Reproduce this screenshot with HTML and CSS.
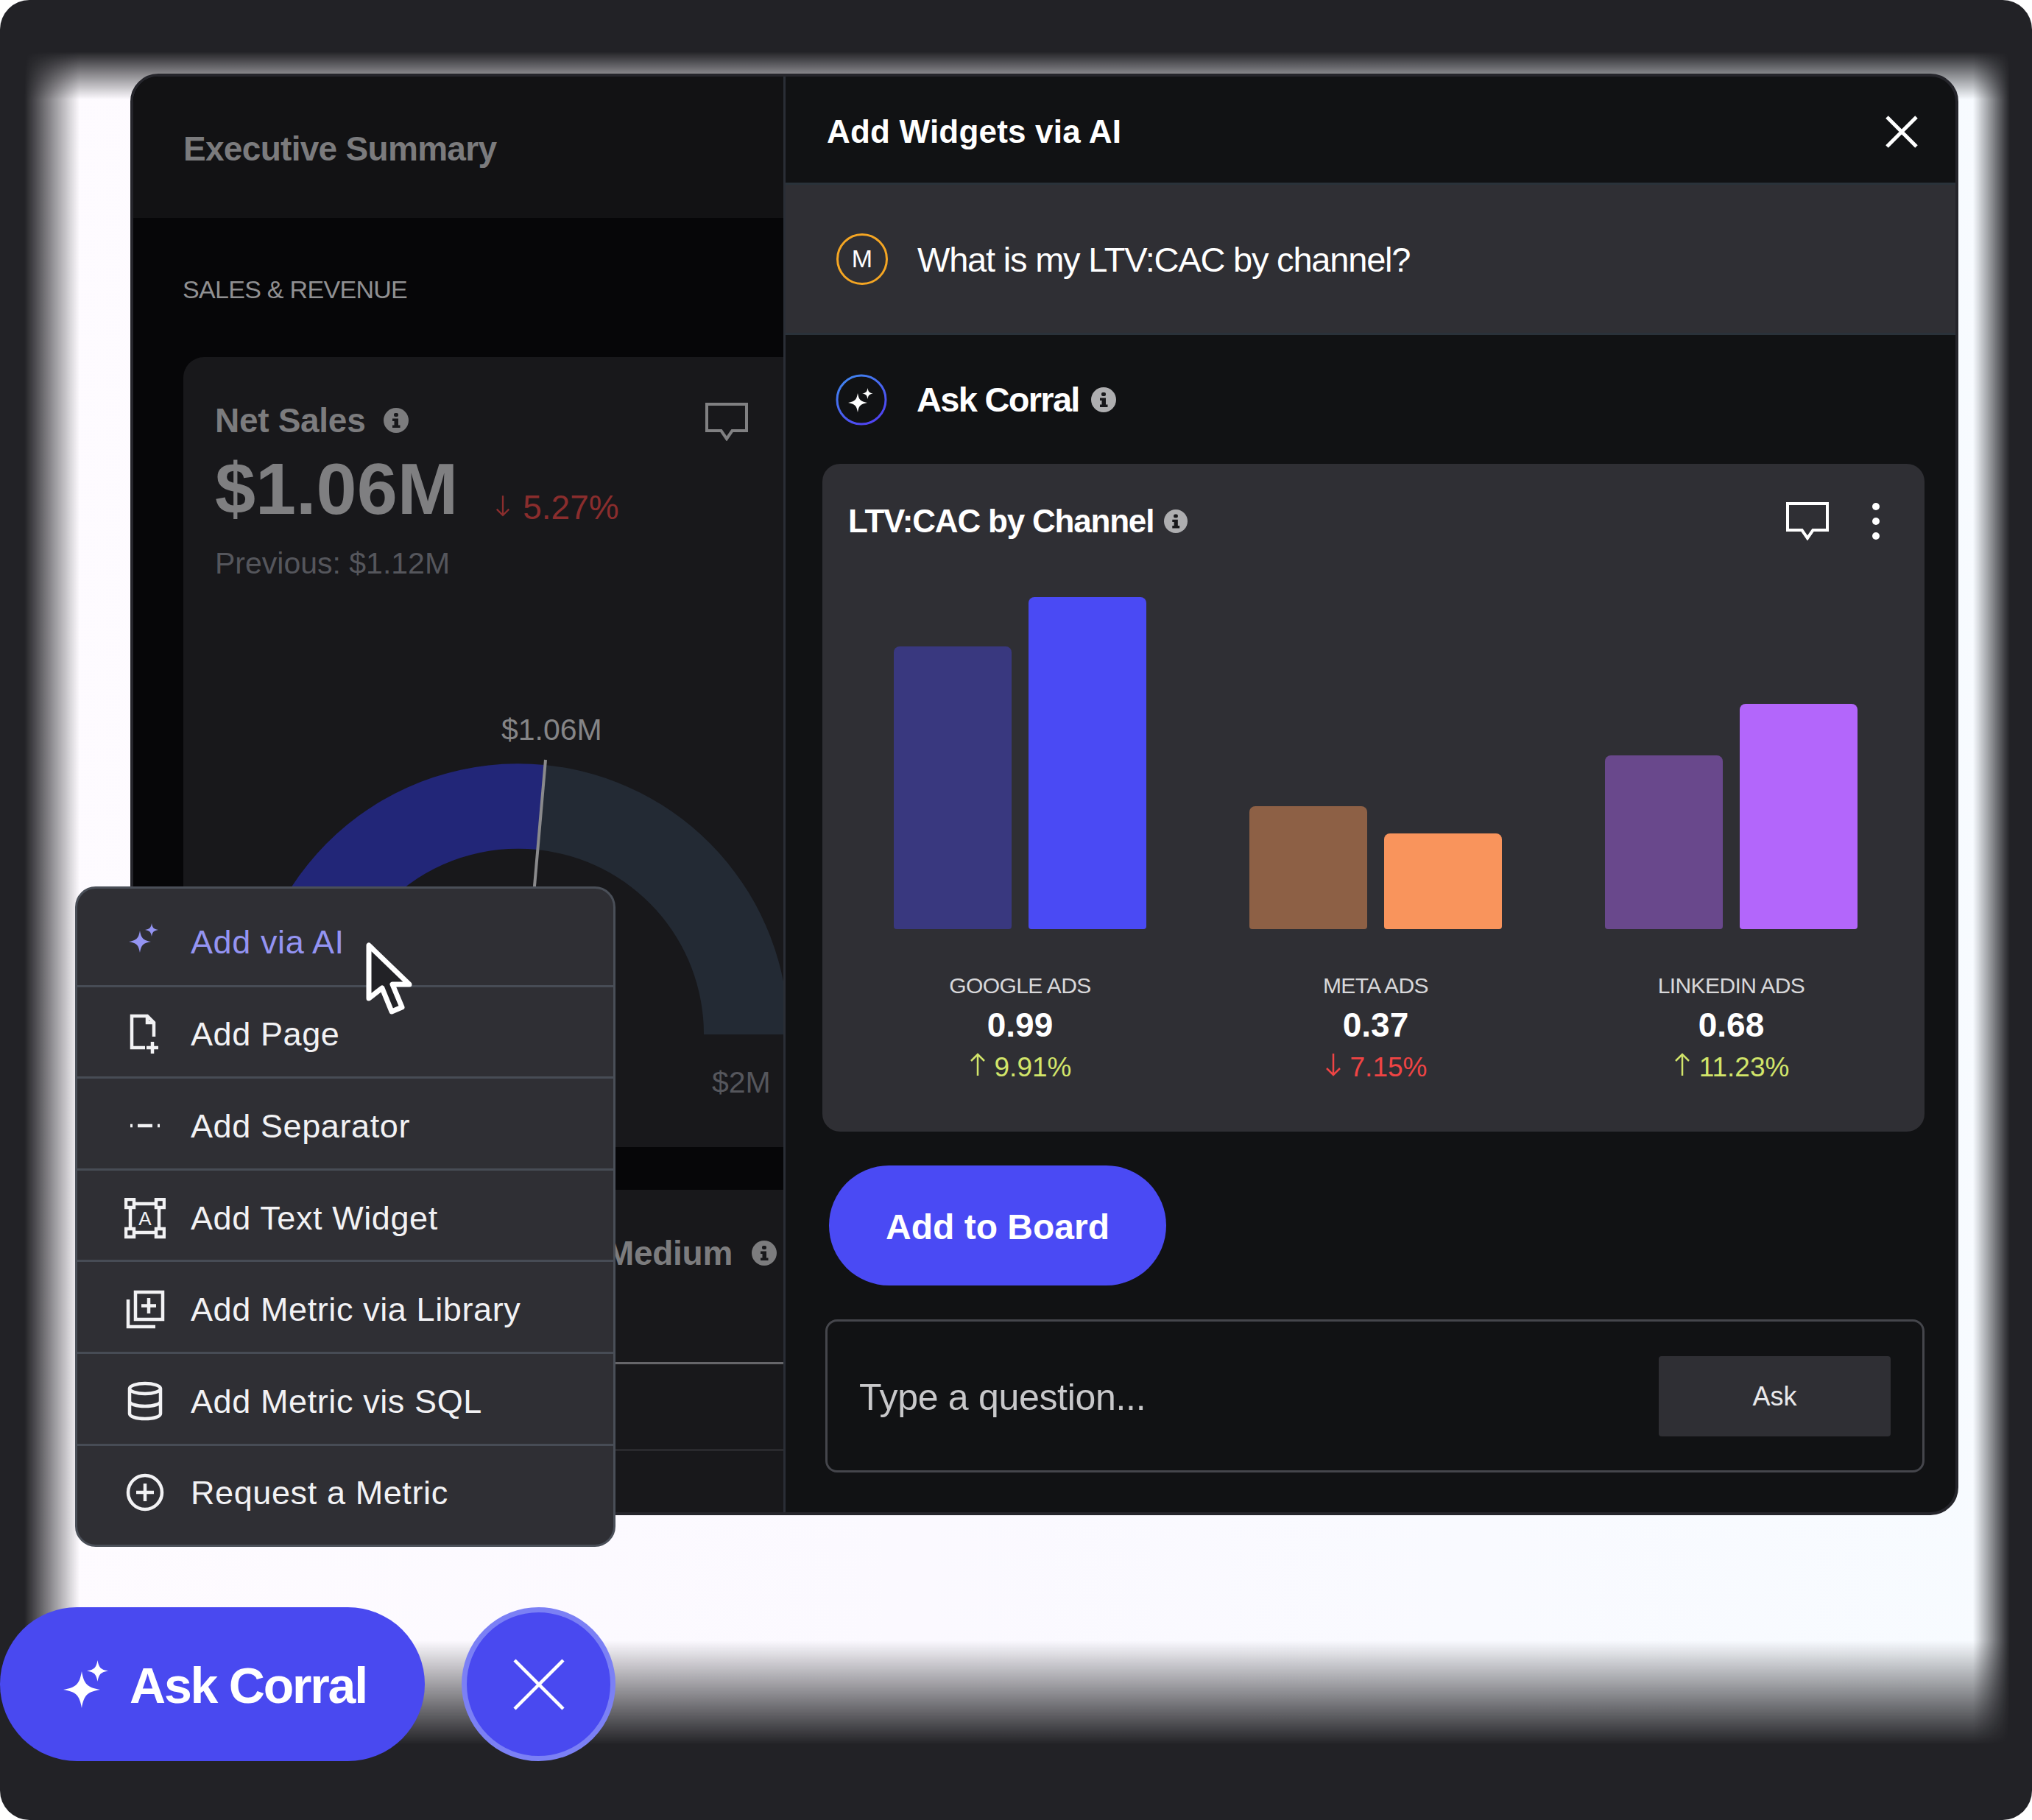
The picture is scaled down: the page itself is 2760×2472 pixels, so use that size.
FILE: index.html
```html
<!DOCTYPE html>
<html lang="en">
<head>
    <meta charset="UTF-8">
    <title>Add Widgets via AI</title>
    <link rel="stylesheet" href="styles.css">
</head>
<body>
    <svg class="sprite" aria-hidden="true">
        <symbol id="star" viewBox="-1 -1 2 2">
            <path d="M0 -1C.12 -.3 .3 -.12 1 0C.3 .12 .12 .3 0 1C-.12 .3 -.3 .12 -1 0C-.3 -.12 -.12 -.3 0 -1Z"/>
        </symbol>
        <symbol id="info" viewBox="0 0 34 34">
            <circle cx="17" cy="17" r="17"/>
            <g class="info-mark">
                <rect x="14" y="7" width="6" height="5" rx="2"/>
                <path d="M12 14.500H20V23.500H22.500V27H12V23.500H14.500V18H12Z"/>
            </g>
        </symbol>
        <symbol id="comment" viewBox="0 0 58 52">
            <path d="M2 2H56V38H36.500L29 49L21.500 38H2Z" fill="none" stroke="currentColor" stroke-width="4"/>
        </symbol>
        <symbol id="arrow-up" viewBox="0 0 24 32">
            <path d="M12 31V2M3 11L12 2L21 11" fill="none" stroke="currentColor" stroke-width="2.500"/>
        </symbol>
        <symbol id="arrow-down" viewBox="0 0 24 32">
            <path d="M12 1V30M3 21L12 30L21 21" fill="none" stroke="currentColor" stroke-width="2.500"/>
        </symbol>
        <symbol id="cross" viewBox="0 0 46 46">
            <path d="M3 3L43 43M43 3L3 43" fill="none" stroke="currentColor" stroke-width="5"/>
        </symbol>
    </svg>

    <div class="frame">
        <div class="glow"></div>

        <div class="panel">
            <div class="board">
                <div class="board-header">Executive Summary</div>
                <div class="section-label">SALES &amp; REVENUE</div>
                <div class="metric-card">
                    <div class="metric-head">
                        <span class="metric-name">Net Sales</span>
                        <svg class="info-icon"><use href="#info"/></svg>
                        <svg class="metric-comment"><use href="#comment"/></svg>
                    </div>
                    <div class="metric-value-row">
                        <span class="metric-value">$1.06M</span>
                        <svg class="metric-arrow"><use href="#arrow-down"/></svg>
                        <span class="metric-delta">5.27%</span>
                    </div>
                    <div class="metric-prev">Previous: $1.12M</div>
                    <div class="gauge-value">$1.06M</div>
                    <svg class="gauge" viewBox="0 0 816 440">
                        <path class="gauge-rest" d="M447 44A367 367 0 0 1 778 410H663A252 252 0 0 0 437 159Z"/>
                        <path class="gauge-fill" d="M44 410A367 367 0 0 1 447 44L437 159A252 252 0 0 0 159 410Z"/>
                        <line class="gauge-needle" x1="448" y1="37" x2="432" y2="220"/>
                    </svg>
                    <div class="gauge-max">$2M</div>
                </div>
                <div class="metric-card metric-card-low">
                    <div class="medium-head">
                        <span class="metric-name">Medium</span>
                        <svg class="info-icon"><use href="#info"/></svg>
                    </div>
                    <div class="medium-line"></div>
                    <div class="medium-line medium-line-faint"></div>
                </div>
            </div>

            <div class="drawer">
                <div class="drawer-header">
                    <span class="drawer-title">Add Widgets via AI</span>
                    <svg class="drawer-close"><use href="#cross"/></svg>
                </div>
                <div class="question-row">
                    <span class="avatar">M</span>
                    <span class="question">What is my LTV:CAC by channel?</span>
                </div>
                <div class="answer-row">
                    <svg class="corral-badge" viewBox="0 0 70 70">
                        <defs>
                            <linearGradient id="badge-ring" x1="0" y1="0" x2="0.6" y2="1">
                                <stop offset="0" stop-color="#3f8cf0"/>
                                <stop offset="1" stop-color="#4f45f2"/>
                            </linearGradient>
                        </defs>
                        <circle cx="35" cy="35" r="33" fill="none" stroke="url(#badge-ring)" stroke-width="3"/>
                        <use href="#star" x="17" y="26" width="26" height="26" fill="#fff"/>
                        <use href="#star" x="36" y="19" width="15" height="15" fill="#fff"/>
                    </svg>
                    <span class="answer-name">Ask Corral</span>
                    <svg class="info-icon info-light"><use href="#info"/></svg>
                </div>

                <div class="chart-card">
                    <div class="chart-head">
                        <span class="chart-title">LTV:CAC by Channel</span>
                        <svg class="info-icon info-light info-small"><use href="#info"/></svg>
                        <svg class="chart-comment"><use href="#comment"/></svg>
                        <div class="chart-more"><i></i><i></i><i></i></div>
                    </div>
                    <div class="chart-grid">
                        <div class="channel">
                            <div class="bars">
                                <div class="bar bar-google-dim" style="height: 384px"></div>
                                <div class="bar bar-google" style="height: 451px"></div>
                            </div>
                            <div class="channel-name">GOOGLE ADS</div>
                            <div class="channel-value">0.99</div>
                            <div class="channel-delta delta-up">
                                <svg class="delta-arrow"><use href="#arrow-up"/></svg>9.91%
                            </div>
                        </div>
                        <div class="channel">
                            <div class="bars">
                                <div class="bar bar-meta-dim" style="height: 167px"></div>
                                <div class="bar bar-meta" style="height: 130px"></div>
                            </div>
                            <div class="channel-name">META ADS</div>
                            <div class="channel-value">0.37</div>
                            <div class="channel-delta delta-down">
                                <svg class="delta-arrow"><use href="#arrow-down"/></svg>7.15%
                            </div>
                        </div>
                        <div class="channel">
                            <div class="bars">
                                <div class="bar bar-linkedin-dim" style="height: 236px"></div>
                                <div class="bar bar-linkedin" style="height: 306px"></div>
                            </div>
                            <div class="channel-name">LINKEDIN ADS</div>
                            <div class="channel-value">0.68</div>
                            <div class="channel-delta delta-up">
                                <svg class="delta-arrow"><use href="#arrow-up"/></svg>11.23%
                            </div>
                        </div>
                    </div>
                </div>

                <button class="add-button">Add to Board</button>

                <div class="ask-box">
                    <span class="ask-placeholder">Type a question...</span>
                    <button class="ask-button">Ask</button>
                </div>
            </div>
        </div>

        <div class="actions">
            <button class="corral-button">
                <svg class="corral-sparkle" viewBox="0 0 70 70">
                    <use href="#star" x="2" y="16" width="50" height="50"/>
                    <use href="#star" x="34" y="1" width="29" height="29"/>
                </svg>
                Ask Corral
            </button>
            <button class="dismiss-button">
                <svg class="dismiss-cross" viewBox="0 0 70 70">
                    <path d="M2 2L68 68M68 2L2 68" fill="none" stroke="currentColor" stroke-width="4.500"/>
                </svg>
            </button>
        </div>

        <div class="menu">
            <div class="menu-item menu-item-active">
                <svg class="menu-icon" viewBox="0 0 56 56">
                    <use href="#star" x="6" y="12" width="30" height="30" fill="currentColor"/>
                    <use href="#star" x="28" y="2" width="18" height="18" fill="currentColor"/>
                </svg>
                Add via AI
            </div>
            <div class="menu-item">
                <svg class="menu-icon" viewBox="0 0 56 56">
                    <path class="icon-line" d="M40 31V12L31 3H10V46H28M31 3V12H40"/>
                    <path class="icon-line" d="M38 38V54M30 46H46"/>
                </svg>
                Add Page
            </div>
            <div class="menu-item">
                <svg class="menu-icon" viewBox="0 0 56 56">
                    <path class="icon-line" d="M18 27H38"/>
                    <path class="icon-line" d="M8 27H11M45 27H48"/>
                </svg>
                Add Separator
            </div>
            <div class="menu-item">
                <svg class="menu-icon" viewBox="0 0 56 56">
                    <path class="icon-line" d="M8 8V47M47 8V47M8 8H47M8 47H47"/>
                    <rect class="icon-box" x="2" y="2" width="11" height="11"/>
                    <rect class="icon-box" x="43" y="2" width="11" height="11"/>
                    <rect class="icon-box" x="2" y="42" width="11" height="11"/>
                    <rect class="icon-box" x="43" y="42" width="11" height="11"/>
                    <text class="icon-letter" x="28" y="37">A</text>
                </svg>
                Add Text Widget
            </div>
            <div class="menu-item">
                <svg class="menu-icon" viewBox="0 0 56 56">
                    <path class="icon-line" d="M15 4H52V41H15ZM33 12V33M23 22.500H43"/>
                    <path class="icon-line" d="M5 14V51H42"/>
                </svg>
                Add Metric via Library
            </div>
            <div class="menu-item">
                <svg class="menu-icon" viewBox="0 0 56 56">
                    <ellipse class="icon-line" cx="28" cy="10" rx="21" ry="7"/>
                    <path class="icon-line" d="M7 10V44C7 48 16 51 28 51S49 48 49 44V10M7 27C7 31 16 34 28 34S49 31 49 27"/>
                </svg>
                Add Metric vis SQL
            </div>
            <div class="menu-item">
                <svg class="menu-icon" viewBox="0 0 56 56">
                    <circle class="icon-line" cx="28" cy="27" r="23"/>
                    <path class="icon-line" d="M28 15V39M16 27H40"/>
                </svg>
                Request a Metric
            </div>
        </div>

        <svg class="cursor" viewBox="0 0 70 104">
            <path d="M8 6V78L26 64L39 96L53 90L40 59H63Z" fill="#222226" stroke="#fff" stroke-width="7" stroke-linejoin="round"/>
        </svg>
    </div>
</body>
</html>
```

FILE: styles.css
```css
body {
    margin: 0;
    background: #fff;
    font-family: 'Liberation Sans', Arial, sans-serif;
    color: #fff;
}

.sprite {
    position: absolute;
    width: 0;
    height: 0;
}

button {
    font-family: inherit;
    border: none;
    color: #fff;
}

.frame {
    position: relative;
    width: 2760px;
    height: 2472px;
    border-radius: 40px;
    overflow: hidden;
    background: #222226;
}

/* soft white backdrop, fades into the dark frame on every side */
.glow {
    position: absolute;
    inset: 0;
    background: linear-gradient(90deg, #fefbff 0%, #fbf9ff 45%, #f7fbff 100%);
    -webkit-mask-image:
        linear-gradient(90deg, transparent 33px, #000 108px, #000 2680px, transparent 2730px),
        linear-gradient(180deg, transparent 70px, #000 135px, #000 2228px, transparent 2370px);
    -webkit-mask-composite: source-in;
    mask-image:
        linear-gradient(90deg, transparent 33px, #000 108px, #000 2680px, transparent 2730px),
        linear-gradient(180deg, transparent 70px, #000 135px, #000 2228px, transparent 2370px);
    mask-composite: intersect;
}

/* main window */
.panel {
    position: relative;
    box-sizing: border-box;
    width: 2483px;
    height: 1958px;
    margin: 100px 0 0 177px;
    display: flex;
    border: 4px solid #25252b;
    border-radius: 38px;
    overflow: hidden;
    background: #111214;
}

.board {
    width: 883px;
    flex-shrink: 0;
    overflow: hidden;
    background: #060608;
}

.board-header {
    height: 192px;
    box-sizing: border-box;
    padding: 72px 0 0 68px;
    background: #121214;
    color: #7b7b7d;
    font-size: 46px;
    font-weight: bold;
    line-height: 52px;
    letter-spacing: -.7px;
}

.section-label {
    height: 42px;
    padding: 76px 0 71px 67px;
    color: #909092;
    font-size: 34px;
    line-height: 42px;
    letter-spacing: -.7px;
}

.metric-card {
    position: relative;
    box-sizing: border-box;
    width: 900px;
    height: 1073px;
    margin-left: 68px;
    padding: 62px 43px 0;
    background: #18181b;
    border-radius: 28px;
}

.metric-card-low {
    height: 460px;
    margin-top: 58px;
    padding: 0;
}

.metric-head {
    display: flex;
    align-items: center;
    gap: 25px;
    height: 48px;
}

.metric-name {
    color: #7c7c7e;
    font-size: 46px;
    font-weight: bold;
    line-height: 48px;
    letter-spacing: -.3px;
}

.info-icon {
    width: 34px;
    height: 34px;
    fill: #7c7c7e;
}

.info-mark {
    fill: #18181b;
}

.info-light {
    fill: #aeaeb0;
}

.info-light .info-mark {
    fill: #111214;
}

.info-small {
    width: 32px;
    height: 32px;
}

.metric-comment {
    position: absolute;
    top: 62px;
    left: 709px;
    width: 58px;
    height: 52px;
    color: #808082;
}

.metric-value-row {
    display: flex;
    align-items: flex-end;
    margin-top: 14px;
    height: 110px;
}

.metric-value {
    color: #7f7f81;
    font-size: 99px;
    font-weight: bold;
    line-height: 110px;
    margin-right: 50px;
}

.metric-arrow {
    width: 22px;
    height: 36px;
    margin: 0 16px 14px 0;
    color: #8a2d2d;
}

.metric-delta {
    color: #8a2d2d;
    font-size: 46px;
    line-height: 56px;
    margin-bottom: 2px;
}

.metric-prev {
    margin-top: 24px;
    color: #55565c;
    font-size: 41px;
    line-height: 44px;
}

.gauge-value {
    position: absolute;
    top: 483px;
    left: 432px;
    color: #858587;
    font-size: 41px;
    line-height: 46px;
}

.gauge {
    position: absolute;
    top: 510px;
    left: 44px;
    width: 816px;
    height: 440px;
}

.gauge-fill {
    fill: #222678;
}

.gauge-rest {
    fill: #232a34;
}

.gauge-needle {
    stroke: #8a8a8c;
    stroke-width: 4;
}

.gauge-max {
    position: absolute;
    top: 963px;
    left: 718px;
    color: #55565c;
    font-size: 41px;
    line-height: 44px;
}

.medium-head {
    display: flex;
    align-items: center;
    gap: 26px;
    height: 172px;
    padding-left: 574px;
    box-sizing: border-box;
}

.medium-line {
    height: 3px;
    margin-top: 62px;
    background: #66666a;
}

.medium-line-faint {
    margin-top: 115px;
    background: #2a2a2e;
}

/* right drawer */
.drawer {
    flex: 1;
    min-width: 0;
    border-left: 3px solid #2a2e36;
}

.drawer-header {
    display: flex;
    align-items: center;
    justify-content: space-between;
    box-sizing: border-box;
    height: 147px;
    padding: 6px 50px 0 56px;
    border-bottom: 3px solid #2a323a;
}

.drawer-title {
    font-size: 44px;
    font-weight: bold;
    letter-spacing: .2px;
}

.drawer-close {
    width: 46px;
    height: 46px;
}

.question-row {
    display: flex;
    align-items: center;
    gap: 40px;
    box-sizing: border-box;
    height: 204px;
    padding-left: 69px;
    background: #2f2f34;
    border-bottom: 3px solid #2a323a;
}

.avatar {
    display: flex;
    align-items: center;
    justify-content: center;
    box-sizing: border-box;
    width: 70px;
    height: 70px;
    border: 3px solid #f5a623;
    border-radius: 50%;
    font-size: 34px;
}

.question {
    margin-top: 2px;
    font-size: 47px;
    letter-spacing: -1.2px;
}

.answer-row {
    display: flex;
    align-items: center;
    box-sizing: border-box;
    height: 175px;
    padding-left: 68px;
}

.corral-badge {
    width: 70px;
    height: 70px;
    margin-right: 40px;
}

.answer-name {
    font-size: 47px;
    font-weight: bold;
    letter-spacing: -1.7px;
    margin-right: 16px;
}

.chart-card {
    box-sizing: border-box;
    height: 907px;
    margin: 0 42px 0 50px;
    padding: 0 21px 0 27px;
    background: #2f2f34;
    border-radius: 24px;
}

.chart-head {
    display: flex;
    align-items: center;
    box-sizing: border-box;
    height: 156px;
    padding-left: 8px;
}

.chart-title {
    font-size: 44px;
    font-weight: bold;
    letter-spacing: -1.2px;
    margin-right: 14px;
}

.chart-comment {
    width: 58px;
    height: 52px;
    margin-left: auto;
    margin-right: 59px;
}

.chart-more {
    display: flex;
    flex-direction: column;
    justify-content: space-between;
    height: 50px;
    margin-right: 40px;
}

.chart-more i {
    display: block;
    width: 10px;
    height: 10px;
    border-radius: 50%;
    background: #fff;
}

.chart-grid {
    display: grid;
    grid-template-columns: repeat(3, 483px);
}

.channel {
    display: flex;
    flex-direction: column;
    align-items: center;
}

.bars {
    display: flex;
    align-items: flex-end;
    gap: 23px;
    height: 476px;
}

.bar {
    width: 160px;
    border-radius: 8px 8px 4px 4px;
}

.bar-google-dim { background: #39387f; }
.bar-google { background: #4a4af4; }
.bar-meta-dim { background: #8d6045; }
.bar-meta { background: #f9945c; }
.bar-linkedin-dim { background: #69488c; }
.bar-linkedin { background: #b366fb; }

.channel-name {
    margin-top: 57px;
    color: #d8d8da;
    font-size: 30px;
    line-height: 40px;
    letter-spacing: -.6px;
}

.channel-value {
    margin-top: 5px;
    font-size: 46px;
    font-weight: bold;
    line-height: 56px;
}

.channel-delta {
    display: flex;
    align-items: center;
    gap: 11px;
    margin-top: 2px;
    font-size: 37px;
    line-height: 56px;
}

.delta-arrow {
    width: 24px;
    height: 32px;
    margin-top: -8px;
}

.delta-up { color: #d2e56a; }
.delta-down { color: #ef4444; }

.add-button {
    display: block;
    width: 458px;
    height: 163px;
    margin: 46px 0 0 59px;
    padding-top: 4px;
    background: #4a4af4;
    border-radius: 82px;
    font-size: 48px;
    font-weight: bold;
}

.ask-box {
    display: flex;
    align-items: center;
    justify-content: space-between;
    box-sizing: border-box;
    height: 208px;
    margin: 46px 42px 0 54px;
    padding: 0 43px 0 43px;
    border: 3px solid #45464c;
    border-radius: 16px;
}

.ask-placeholder {
    margin-top: 4px;
    color: #c8c8ca;
    font-size: 50px;
    letter-spacing: -.3px;
}

.ask-button {
    width: 315px;
    height: 109px;
    padding-top: 3px;
    background: #2f2f34;
    border-radius: 4px;
    color: #e8e8ea;
    font-size: 36px;
}

/* floating buttons */
.actions {
    position: relative;
    display: flex;
    gap: 50px;
    margin-top: 125px;
}

.corral-button {
    display: flex;
    align-items: center;
    width: 577px;
    height: 209px;
    padding: 3px 0 0 84px;
    background: #4949f0;
    border-radius: 105px;
    font-size: 68px;
    font-weight: bold;
    letter-spacing: -2.2px;
}

.corral-sparkle {
    width: 70px;
    height: 70px;
    margin-right: 22px;
    fill: #fff;
}

.dismiss-button {
    display: flex;
    align-items: center;
    justify-content: center;
    box-sizing: border-box;
    width: 209px;
    height: 209px;
    background: #4949f0;
    border: 7px solid #7b80f5;
    border-radius: 50%;
}

.dismiss-cross {
    width: 70px;
    height: 70px;
}

/* add menu over the window */
.menu {
    position: absolute;
    top: 1204px;
    left: 102px;
    box-sizing: border-box;
    width: 734px;
    height: 897px;
    padding-top: 6px;
    background: #2f2f34;
    border: 3px solid #4a4f58;
    border-radius: 28px;
}

.menu-item {
    display: flex;
    align-items: center;
    box-sizing: border-box;
    height: 124.6px;
    padding: 8px 0 0 64px;
    font-size: 45px;
    letter-spacing: .6px;
    color: #f2f2f4;
    border-top: 3px solid #474c55;
}

.menu-item:first-child {
    padding-top: 10px;
    border-top: none;
}

.menu-item-active {
    color: #9494f2;
}

.menu-icon {
    width: 56px;
    height: 56px;
    margin-right: 34px;
}

.icon-line,
.icon-box {
    fill: none;
    stroke: currentColor;
    stroke-width: 4.500;
}

.icon-box {
    fill: #2f2f34;
}

.icon-letter {
    fill: currentColor;
    font-size: 26px;
    text-anchor: middle;
    letter-spacing: 0;
}

.cursor {
    position: absolute;
    top: 1278px;
    left: 493px;
    width: 70px;
    height: 104px;
}
```
